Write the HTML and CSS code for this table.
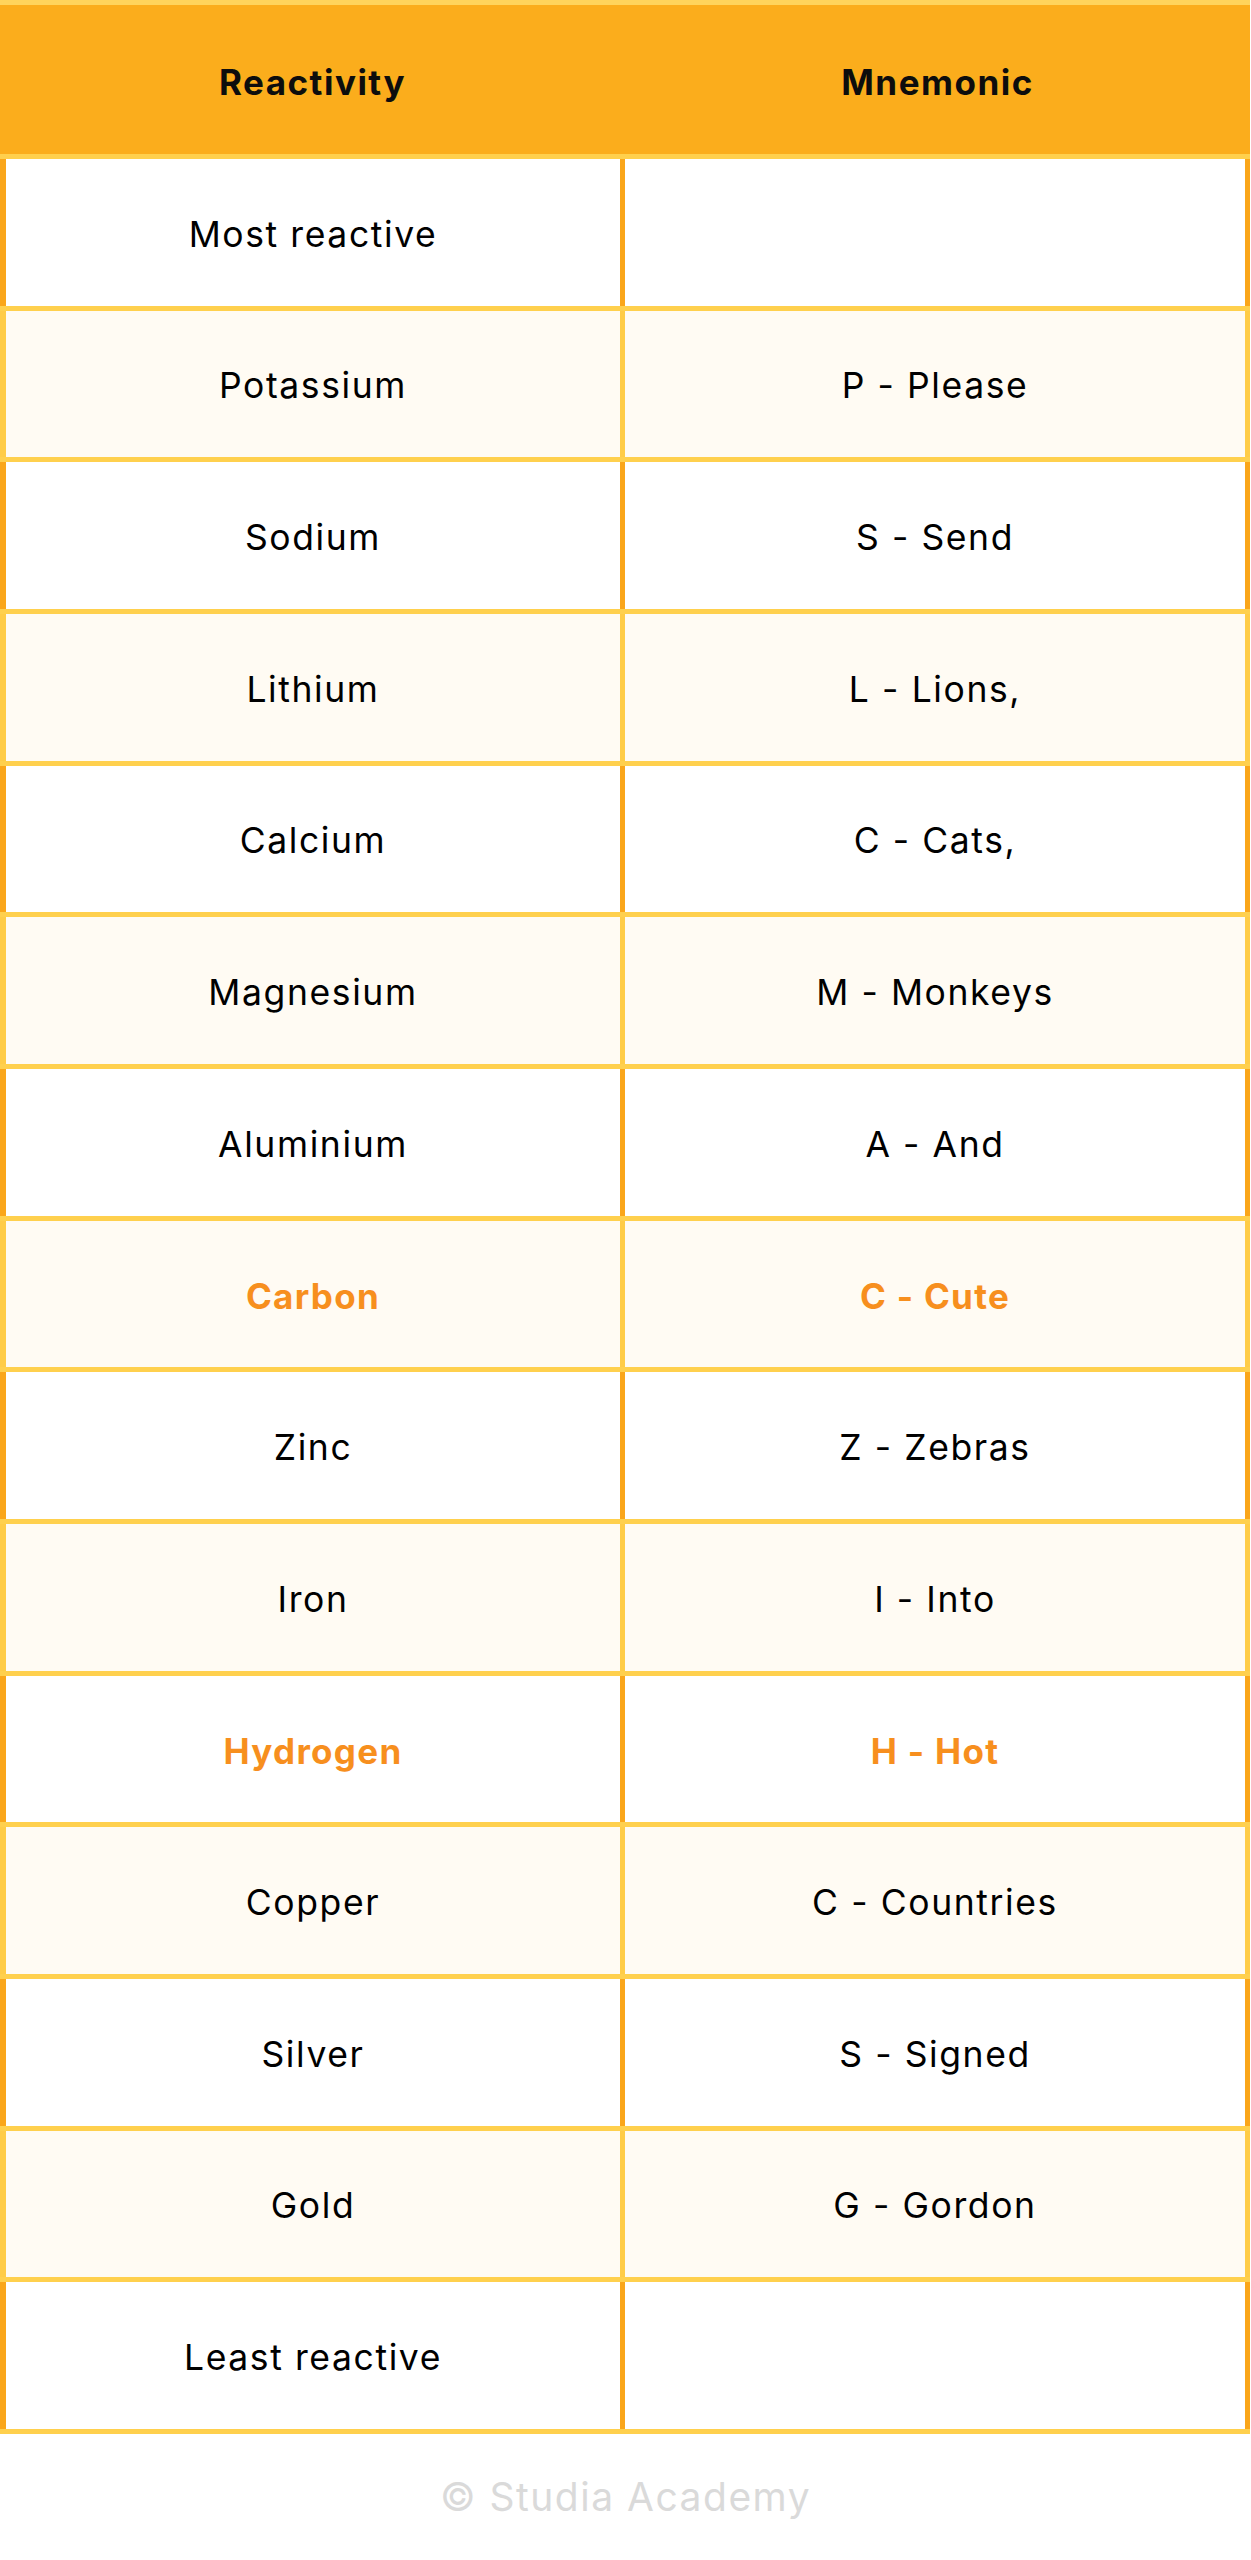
FILE: index.html
```html
<!DOCTYPE html>
<html lang="en">
<head>
<meta charset="utf-8">
<title>Reactivity series mnemonic</title>
<link rel="stylesheet" href="styles.css">
</head>
<body>
<div class="page">
  <div class="table">
    <div class="head">
      <div class="hcell">Reactivity</div>
      <div class="hcell">Mnemonic</div>
    </div>
    <div class="row odd"><div class="cell c1">Most reactive</div><div class="cell c2"></div></div>
    <div class="row even"><div class="cell c1">Potassium</div><div class="cell c2">P - Please</div></div>
    <div class="row odd"><div class="cell c1">Sodium</div><div class="cell c2">S - Send</div></div>
    <div class="row even"><div class="cell c1">Lithium</div><div class="cell c2">L - Lions,</div></div>
    <div class="row odd"><div class="cell c1">Calcium</div><div class="cell c2">C - Cats,</div></div>
    <div class="row even"><div class="cell c1">Magnesium</div><div class="cell c2">M - Monkeys</div></div>
    <div class="row odd"><div class="cell c1">Aluminium</div><div class="cell c2">A - And</div></div>
    <div class="row even hl"><div class="cell c1">Carbon</div><div class="cell c2">C - Cute</div></div>
    <div class="row odd"><div class="cell c1">Zinc</div><div class="cell c2">Z - Zebras</div></div>
    <div class="row even"><div class="cell c1">Iron</div><div class="cell c2">I - Into</div></div>
    <div class="row odd hl"><div class="cell c1">Hydrogen</div><div class="cell c2">H - Hot</div></div>
    <div class="row even"><div class="cell c1">Copper</div><div class="cell c2">C - Countries</div></div>
    <div class="row odd"><div class="cell c1">Silver</div><div class="cell c2">S - Signed</div></div>
    <div class="row even"><div class="cell c1">Gold</div><div class="cell c2">G - Gordon</div></div>
    <div class="row odd last"><div class="cell c1">Least reactive</div><div class="cell c2"></div></div>
  </div>
  <div class="footer">© Studia Academy</div>
</div>
</body>
</html>
```
FILE: styles.css
```css
html, body {
  margin: 0;
  padding: 0;
  background: #ffffff;
}

body {
  font-family: Inter, "DejaVu Sans", sans-serif;
  color: #000000;
}

.page {
  width: 1251px;
}

.table {
  width: 1250px;
}

.head {
  display: flex;
  height: 149px;
  border-top: 5px solid #ffd45c;
  background: #fbad1c;
}

.hcell {
  flex: 0 0 625px;
  display: flex;
  align-items: center;
  justify-content: center;
  font-size: 35px;
  font-weight: 700;
  letter-spacing: 1.5px;
  color: #0d0d0d;
  padding-top: 4px;
  box-sizing: border-box;
}

.row {
  display: flex;
  height: 146.67px;
  border-top: 5px solid #ffd04d;
}

.row.last {
  border-bottom: 5px solid #ffd04d;
}

.cell {
  box-sizing: border-box;
  width: 625px;
  display: flex;
  align-items: center;
  justify-content: center;
  padding-top: 4px;
  font-size: 35.5px;
  letter-spacing: 1.6px;
  border-right: 5px solid;
}

.c1 {
  border-left: 6px solid;
}

.row.odd {
  background: #ffffff;
}

.row.odd .cell {
  border-color: #faa61a;
}

.row.even {
  background: #fffbf3;
}

.row.even .cell {
  border-color: #ffcc47;
}

.row.hl .cell {
  color: #f78f1e;
  font-weight: 700;
  font-size: 35px;
  letter-spacing: 1.3px;
}

.footer {
  height: 126px;
  display: flex;
  align-items: center;
  justify-content: center;
  font-size: 39px;
  letter-spacing: 1.5px;
  color: #dadada;
}
```
